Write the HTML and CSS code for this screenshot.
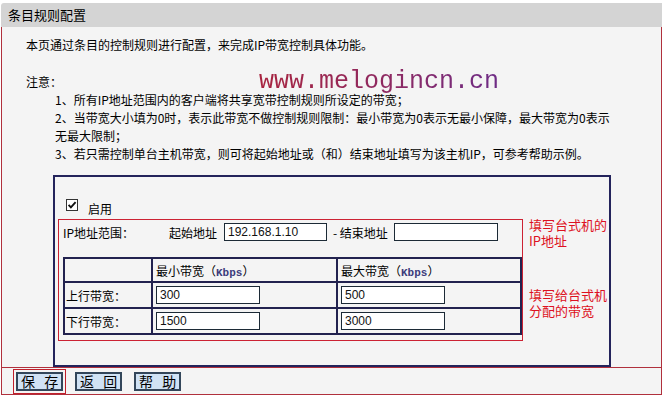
FILE: index.html
```html
<!DOCTYPE html>
<html lang="zh-CN">
<head>
    <meta charset="UTF-8">
    <meta name="viewport" content="width=device-width, initial-scale=1.0">
    <title>条目规则配置</title>
    <link rel="stylesheet" href="styles.css">
</head>
<body>

<div class="page">
    <!-- Title -->
    <div class="title-bar">条目规则配置</div>

    <!-- Main panel -->
    <div class="panel">
        <p class="intro">本页通过条目的控制规则进行配置，来完成IP带宽控制具体功能。</p>
        <p class="note-title">注意：</p>
        <div class="watermark">www.melogincn.cn</div>
        <ul class="notes">
            <li>1、所有IP地址范围内的客户端将共享宽带控制规则所设定的带宽；</li>
            <li>2、当带宽大小填为0时，表示此带宽不做控制规则限制：最小带宽为0表示无最小保障，最大带宽为0表示<br>无最大限制；</li>
            <li>3、若只需控制单台主机带宽，则可将起始地址或（和）结束地址填写为该主机IP，可参考帮助示例。</li>
        </ul>

        <div class="rule-box">
            <div class="enable-row">
                <span class="check">
                    <svg width="12" height="12" viewBox="0 0 12 12">
                        <rect x="0.5" y="0.5" width="11" height="11" fill="#fff" stroke="#333"/>
                        <path d="M2.6 5.8 L4.9 8.3 L9.6 3.2" fill="none" stroke="#111" stroke-width="1.9"/>
                    </svg>
                </span>
                <span class="enable-label">启用</span>
            </div>

            <div class="rule-body">
                <div class="range-box">
                    <div class="ip-row">
                        <span class="ip-label">IP地址范围：</span>
                        <span>起始地址</span>
                        <input class="field ip-start" type="text" value="192.168.1.10">
                        <span class="ip-sep">- 结束地址</span>
                        <input class="field ip-end" type="text" value="">
                    </div>

                    <table class="bw-table">
                        <tr class="head-row">
                            <td class="col-name"></td>
                            <td class="col-min">最小带宽（<span class="unit">Kbps</span>）</td>
                            <td class="col-max">最大带宽（<span class="unit">Kbps</span>）</td>
                        </tr>
                        <tr>
                            <td>上行带宽：</td>
                            <td><input class="field" type="text" value="300"></td>
                            <td><input class="field" type="text" value="500"></td>
                        </tr>
                        <tr>
                            <td>下行带宽：</td>
                            <td><input class="field" type="text" value="1500"></td>
                            <td><input class="field" type="text" value="3000"></td>
                        </tr>
                    </table>
                </div>

                <div class="hints">
                    <p class="hint">填写台式机的<br>IP地址</p>
                    <p class="hint hint-bw">填写给台式机<br>分配的带宽</p>
                </div>
            </div>
        </div>
    </div>

    <!-- Buttons -->
    <div class="button-bar">
        <button type="button" class="btn focused">保 存</button>
        <button type="button" class="btn">返 回</button>
        <button type="button" class="btn">帮 助</button>
    </div>
</div>

</body>
</html>
```

FILE: styles.css
```css
body {
    margin: 0;
    padding: 0;
    background-color: #fff;
    color: #000;
    font-family: "Noto Sans CJK SC", "Liberation Sans", sans-serif;
    font-size: 12px;
}

p {
    margin: 0;
}

.page {
    width: 661px;
    margin-left: 1px;
    padding-top: 3px;
}

.title-bar {
    height: 24px;
    line-height: 24px;
    padding-left: 7px;
    background-color: #d4d4d4;
    border-radius: 3px 0 0 0;
    font-size: 13px;
}

.panel {
    position: relative;
    background-color: #f4f4f4;
    border-left: 1px solid #b0303c;
    border-right: 1px solid #b0303c;
    padding: 9px 0 0 24px;
}

.intro,
.note-title,
.notes li {
    line-height: 18px;
}

.note-title {
    margin-top: 19px;
}

.watermark {
    position: absolute;
    left: 257px;
    top: 41px;
    font-family: "Liberation Mono", monospace;
    font-size: 25px;
    line-height: 28px;
    background: linear-gradient(90deg, #a8243f, #8a2a66 60%, #6e2c86);
    -webkit-background-clip: text;
    background-clip: text;
    color: transparent;
}

.notes {
    list-style: none;
    margin: 0 0 0 29px;
    padding: 0;
    white-space: nowrap;
}

/* navy framed rule */
.rule-box {
    box-sizing: border-box;
    width: 558px;
    height: 192px;
    margin: 12px 0 0 27px;
    padding: 22px 0 0 3px;
    border: 2px solid #23235b;
}

.enable-row {
    display: flex;
    align-items: flex-start;
    height: 20px;
    margin-left: 8px;
}

.check {
    display: flex;
    width: 12px;
    height: 12px;
}

.enable-label {
    margin: 1px 0 0 10px;
    line-height: 18px;
}

.rule-body {
    display: flex;
    align-items: flex-start;
}

.range-box {
    box-sizing: border-box;
    width: 465px;
    border: 1px solid #cc2233;
    padding: 3px 0 5px 4px;
}

.ip-row {
    display: flex;
    align-items: center;
    height: 18px;
}

.ip-label {
    width: 106px;
}

.field {
    box-sizing: border-box;
    height: 18px;
    width: 104px;
    padding: 0 3px;
    border: 1px solid #1c2a36;
    background-color: #fff;
    font-family: "Liberation Sans", sans-serif;
    font-size: 12px;
    color: #111;
}

.ip-start {
    width: 103px;
    margin-left: 7px;
}

.ip-sep {
    margin-left: 6px;
}

.ip-end {
    margin-left: 6px;
}

.bw-table {
    margin-top: 16px;
    border-spacing: 0;
    border-top: 2px solid #22224f;
    border-left: 2px solid #22224f;
    table-layout: fixed;
    width: 459px;
}

.bw-table td {
    box-sizing: border-box;
    height: 26px;
    padding: 0 3px;
    border-right: 2px solid #22224f;
    border-bottom: 2px solid #22224f;
    font-size: 12px;
    white-space: nowrap;
}

.bw-table .head-row td {
    height: 24px;
}

.col-name {
    width: 88px;
}

.col-min {
    width: 185px;
}

.col-max {
    width: 184px;
}

.bw-table td:first-child {
    padding-left: 1px;
}

.bw-table .field {
    display: block;
}

.unit {
    font-family: "Liberation Mono", monospace;
    font-weight: bold;
    font-size: 11px;
    color: #3c3c7c;
}

.hints {
    margin-left: 6px;
}

.hint {
    color: #dd1122;
    font-size: 13px;
    line-height: 16px;
    margin-top: -2px;
}

.hint-bw {
    margin-top: 38px;
}

/* bottom buttons */
.button-bar {
    display: flex;
    gap: 12px;
    background-color: #f4f4f4;
    border: 1px solid #b0303c;
    padding: 4px 0 3px 14px;
}

.btn {
    box-sizing: border-box;
    width: 47px;
    height: 19px;
    padding: 0 0 0 3px;
    background-color: #d0e2f4;
    border: 2px solid #33465a;
    font-family: "Noto Sans CJK SC", sans-serif;
    font-size: 14px;
    line-height: 15px;
    letter-spacing: 3px;
    white-space: nowrap;
    overflow: hidden;
    color: #000;
    cursor: pointer;
}

.btn.focused {
    outline: 1px solid #c0202c;
    outline-offset: 2px;
}
```
